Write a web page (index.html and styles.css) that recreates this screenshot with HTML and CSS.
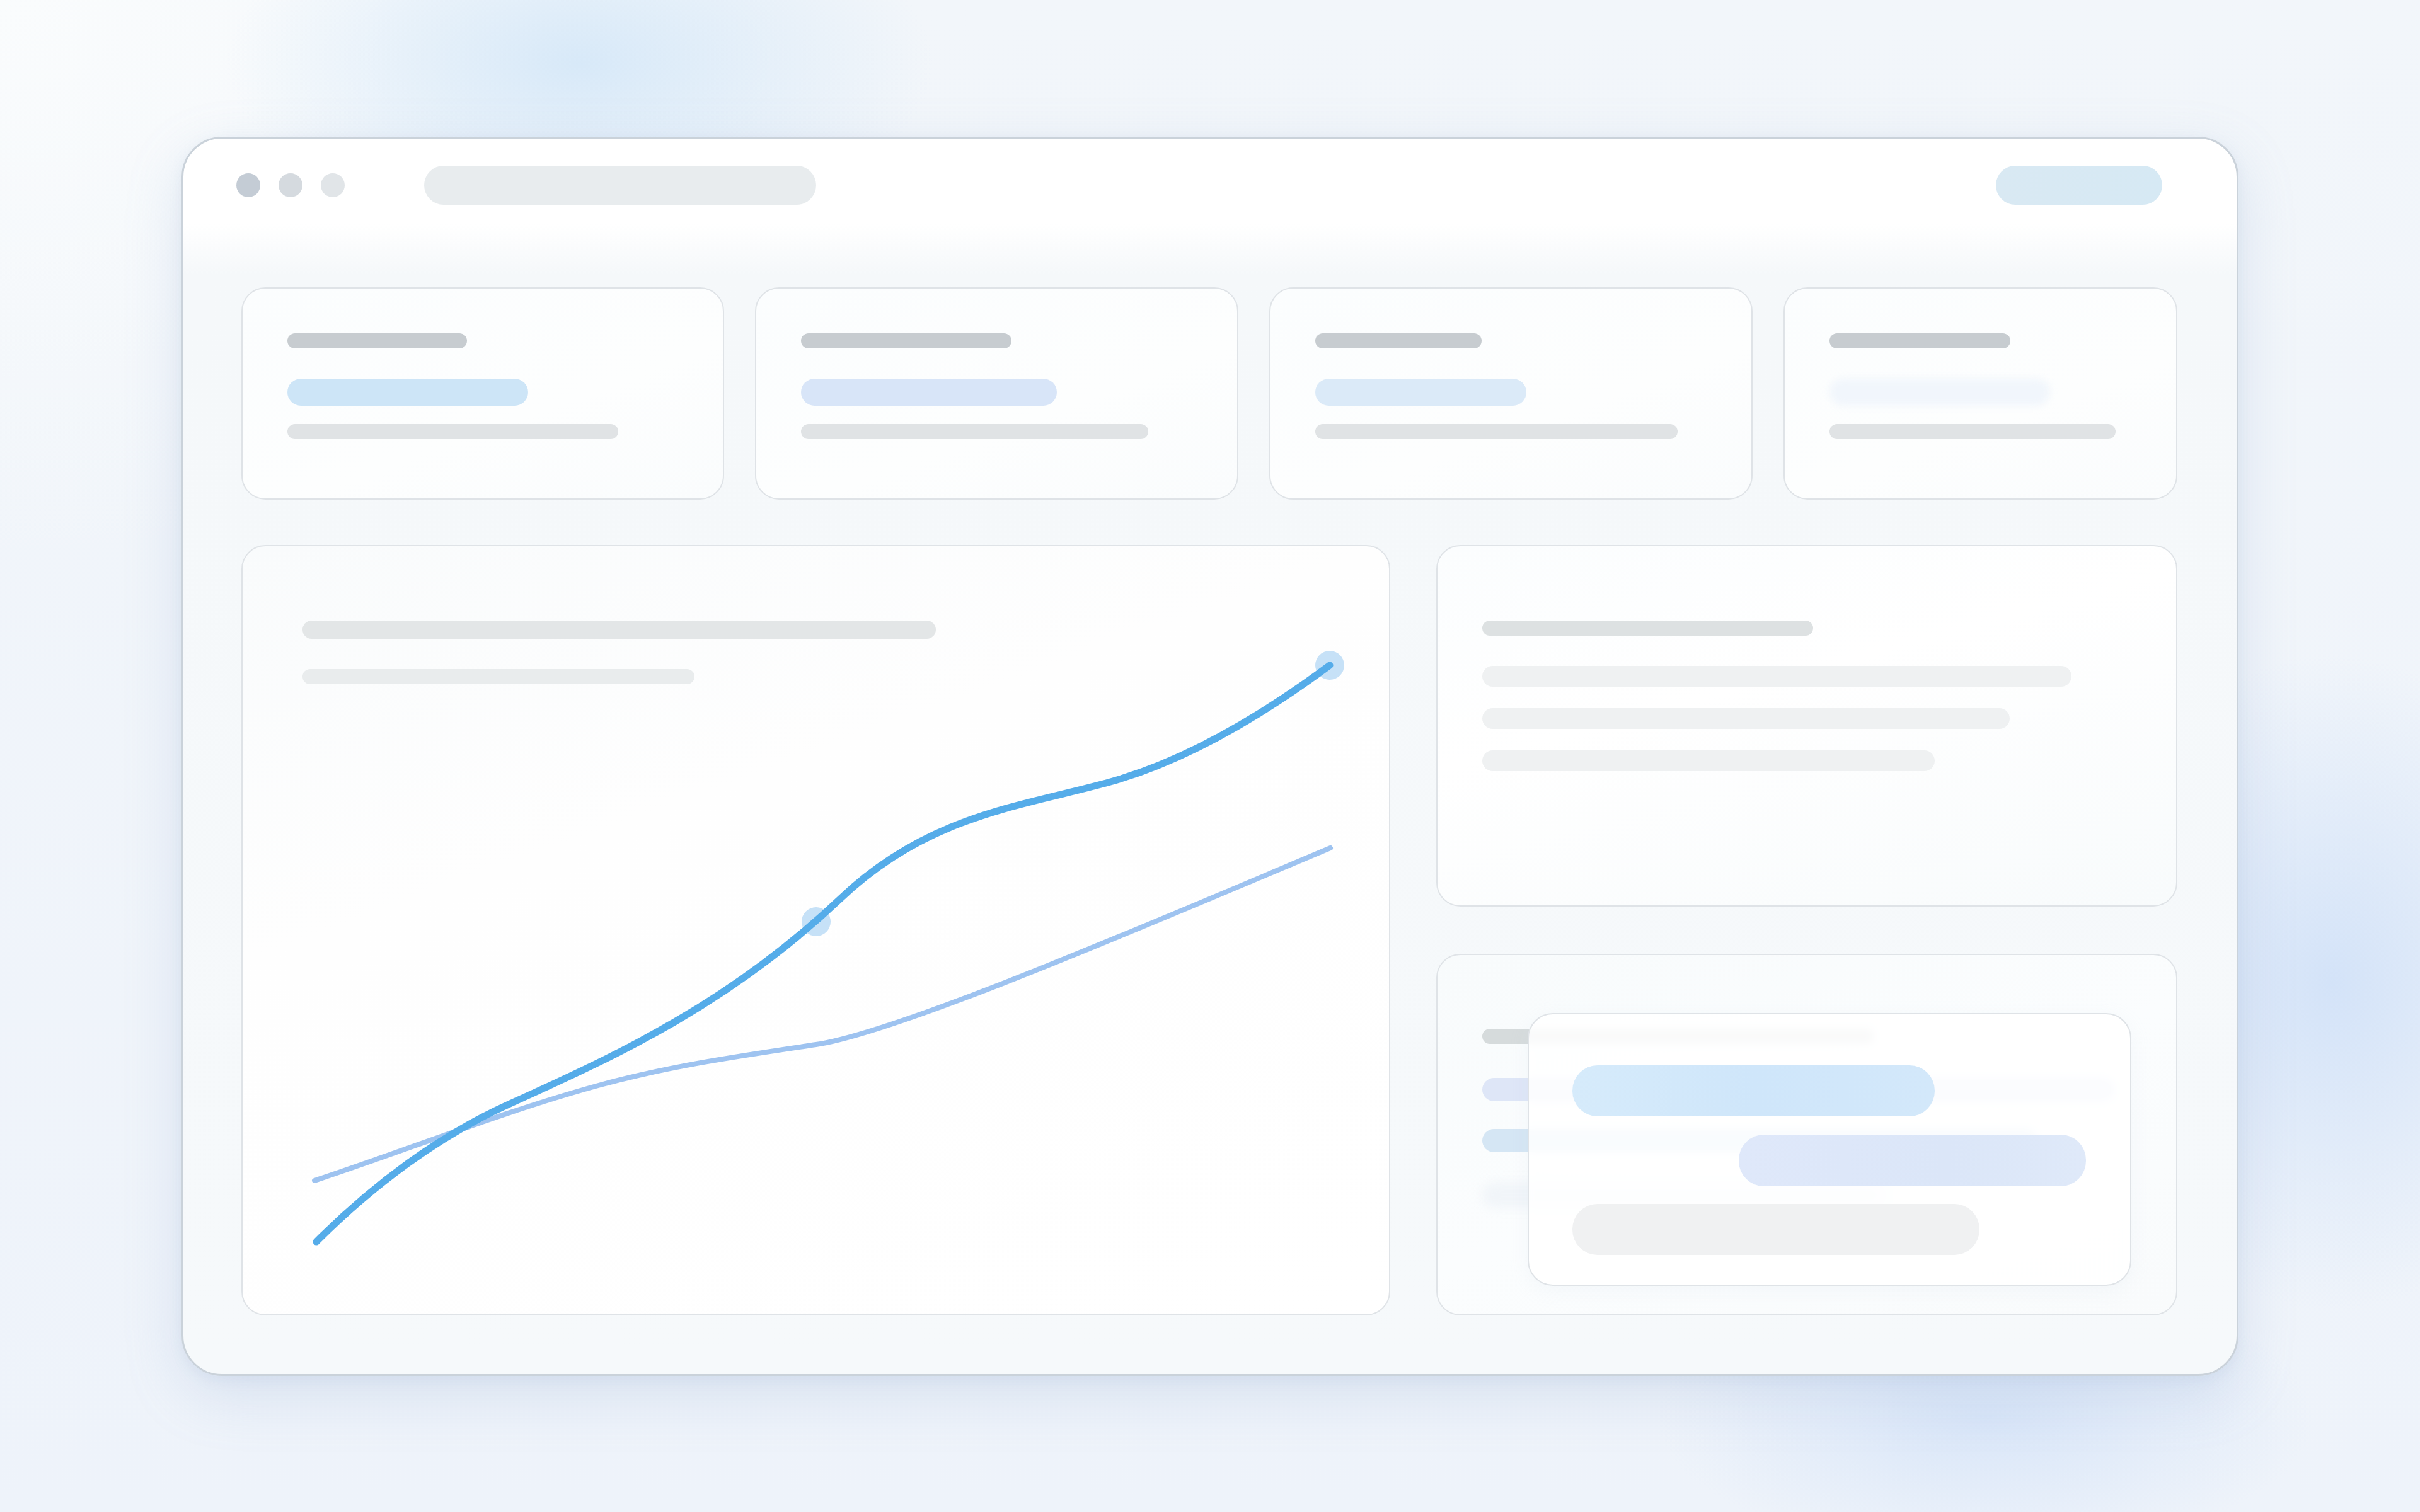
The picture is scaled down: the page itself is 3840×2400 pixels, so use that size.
FILE: index.html
```html
<!DOCTYPE html>
<html lang="en">
<head>
<meta charset="utf-8">
<title>Dashboard skeleton</title>
<link rel="stylesheet" href="styles.css">
</head>
<body>
<div class="window">
  <header class="titlebar">
    <div class="dots">
      <span class="dot dot-1"></span>
      <span class="dot dot-2"></span>
      <span class="dot dot-3"></span>
    </div>
    <div class="url"></div>
    <div class="action"></div>
  </header>
  <main class="content">
    <section class="stats">
      <div class="card stat">
        <div class="bar label w-285"></div>
        <div class="bar value value-1 w-382"></div>
        <div class="bar meta w-525"></div>
      </div>
      <div class="card stat">
        <div class="bar label w-334"></div>
        <div class="bar value value-2 w-406"></div>
        <div class="bar meta w-551"></div>
      </div>
      <div class="card stat">
        <div class="bar label w-264"></div>
        <div class="bar value value-3 w-335"></div>
        <div class="bar meta w-575"></div>
      </div>
      <div class="card stat">
        <div class="bar label w-287"></div>
        <div class="bar value value-4 w-350"></div>
        <div class="bar meta w-454"></div>
      </div>
    </section>
    <section class="main-row">
      <div class="card chart">
        <div class="chart-head">
          <div class="bar chart-title"></div>
          <div class="bar chart-sub"></div>
        </div>
        <svg class="chart-svg" viewBox="386 1085 1819 1000" preserveAspectRatio="xMinYMin meet">
          <path class="line-2" d="M500,1873 C651,1823 803,1762 954,1721 C1068,1690 1182,1674 1296,1657 C1430,1637 1840,1459 2112,1345"/>
          <circle class="point" cx="1296" cy="1462" r="23"/>
          <circle class="point" cx="2111" cy="1055" r="23"/>
          <path class="line-1" d="M503,1970 C593,1880 698,1801.5 808,1752 C983,1673 1160,1591 1335,1425 C1475,1292 1623,1279 1763,1240 C1879,1207.5 1995,1141 2111,1055"/>
        </svg>
      </div>
      <div class="side">
        <div class="card list">
          <div class="bar list-title"></div>
          <div class="bar row w-935"></div>
          <div class="bar row w-837"></div>
          <div class="bar row w-718"></div>
        </div>
        <div class="card stack">
          <div class="bar s-title"></div>
          <div class="bar s-row s-row-1"></div>
          <div class="bar s-row s-row-2"></div>
          <div class="bar s-row s-row-3"></div>
          <div class="popover">
            <div class="pill pill-1"></div>
            <div class="pill pill-2"></div>
            <div class="pill pill-3"></div>
          </div>
        </div>
      </div>
    </section>
  </main>
</div>
</body>
</html>
```

FILE: styles.css
```css
* { box-sizing: border-box; }

html, body {
  margin: 0;
  padding: 0;
}

body {
  width: 3840px;
  height: 2400px;
  overflow: hidden;
  display: flex;
  align-items: center;
  justify-content: center;
  font-family: "Liberation Sans", Arial, sans-serif;
  background-color: #eef3fa;
  background-image:
    radial-gradient(ellipse 560px 280px at 920px 100px, rgba(214, 232, 248, 0.95), rgba(214, 232, 248, 0) 100%),
    radial-gradient(ellipse 420px 520px at 3700px 1560px, rgba(210, 226, 248, 0.95), rgba(210, 226, 248, 0) 100%),
    radial-gradient(ellipse 520px 220px at 3150px 2250px, rgba(214, 228, 248, 0.9), rgba(214, 228, 248, 0) 100%),
    radial-gradient(ellipse 1300px 900px at 0px 0px, rgba(250, 252, 253, 1), rgba(250, 252, 253, 0) 100%),
    linear-gradient(180deg, #f2f6fa 0%, #eef3fa 100%);
}

.window {
  width: 3264px;
  height: 1967px;
  border: 3px solid #cad2da;
  border-radius: 64px;
  overflow: hidden;
  background: linear-gradient(180deg, #ffffff 0px, #ffffff 135px, #f5f8fa 215px, #f6f9fb 100%);
  box-shadow: 0 30px 90px rgba(130, 160, 205, 0.22), 0 6px 20px rgba(150, 170, 200, 0.12);
  display: flex;
  flex-direction: column;
}

/* title bar */
.titlebar {
  height: 148px;
  flex: 0 0 auto;
  display: flex;
  align-items: center;
  padding: 0 118px 0 84px;
}

.dots {
  display: flex;
  gap: 29px;
}

.dot {
  width: 38px;
  height: 38px;
  border-radius: 50%;
  display: block;
}
.dot-1 { background: #c4ccd5; }
.dot-2 { background: #d5dadf; }
.dot-3 { background: #e1e5e8; }

.url {
  margin-left: 126px;
  width: 622px;
  height: 62px;
  border-radius: 31px;
  background: #e8ecee;
}

.action {
  margin-left: auto;
  width: 264px;
  height: 62px;
  border-radius: 31px;
  background: linear-gradient(90deg, #d9e9f3, #d6e9f4);
}

/* content */
.content {
  flex: 1 1 auto;
  padding: 88px 94px 0 92px;
  display: flex;
  flex-direction: column;
  gap: 72px;
}

.card {
  border: 2px solid #dfe3e7;
  border-radius: 38px;
  background: linear-gradient(160deg, #fbfdfe 0%, #fdfefe 60%, #fafcfd 100%);
}

.bar {
  border-radius: 999px;
}

.stats {
  display: grid;
  grid-template-columns: 766px 767px 767px 1fr;
  gap: 49px;
  height: 337px;
}

.stat {
  padding: 71px 0 0 71px;
}

.stat .label {
  height: 24px;
  background: #c7ccd0;
}
.stat .value {
  margin-top: 48px;
  height: 43px;
}
.stat .meta {
  margin-top: 29px;
  height: 24px;
  background: #e0e3e5;
}

.value-1 { background: #cde5f7; }
.value-2 { background: #d8e5f8; }
.value-3 { background: #dbeaf8; }
.value-4 { background: #f1f6fc; filter: blur(6px); }

.w-264 { width: 264px; }
.w-285 { width: 285px; }
.w-287 { width: 287px; }
.w-334 { width: 334px; }
.w-335 { width: 335px; }
.w-350 { width: 350px; }
.w-382 { width: 382px; }
.w-406 { width: 406px; }
.w-454 { width: 454px; }
.w-525 { width: 525px; }
.w-551 { width: 551px; }
.w-575 { width: 575px; }
.w-718 { width: 718px; }
.w-837 { width: 837px; }
.w-935 { width: 935px; }

.main-row {
  display: grid;
  grid-template-columns: 1823px 1fr;
  gap: 73px;
  height: 1223px;
}

/* chart */
.chart {
  display: flex;
  flex-direction: column;
  background: linear-gradient(160deg, #f9fbfc 0%, #fefefe 35%, #ffffff 100%);
}

.chart-head {
  padding: 118px 0 0 95px;
  flex: 0 0 auto;
}

.chart-title {
  width: 1005px;
  height: 29px;
  background: #e3e6e7;
}

.chart-sub {
  margin-top: 48px;
  width: 622px;
  height: 24px;
  background: #e9eced;
}

.chart-svg {
  display: block;
  flex: 1 1 auto;
  width: 100%;
  min-height: 0;
  overflow: visible;
}

.line-1 {
  fill: none;
  stroke: #55ace9;
  stroke-width: 11;
  stroke-linecap: round;
}

.line-2 {
  fill: none;
  stroke: #9ec3f0;
  stroke-width: 8;
  stroke-linecap: round;
}

.point {
  fill: #c6e1f7;
}

/* side column */
.side {
  display: grid;
  grid-template-rows: 1fr 1fr;
  gap: 75px;
}

.list {
  padding: 118px 0 0 71px;
  background: linear-gradient(165deg, #fbfdfe 0%, #ffffff 40%, #f8fbfc 100%);
}

.list-title {
  width: 525px;
  height: 24px;
  background: #dde1e2;
}

.list .row {
  margin-top: 34px;
  height: 33px;
  background: #eff1f2;
}
.list .list-title + .row { margin-top: 48px; }

.stack {
  position: relative;
  padding: 117px 0 0 71px;
  background: linear-gradient(160deg, #f8fbfc 0%, #fbfdfe 50%, #f9fbfc 100%);
}

.s-title {
  width: 621px;
  height: 24px;
  background: #d6dbdc;
}

.s-row { height: 37px; }
.s-row-1 { margin-top: 54px; width: 1003px; background: #dee6f7; }
.s-row-2 { margin-top: 44px; width: 880px; background: #d5e6f4; }
.s-row-3 { margin-top: 48px; width: 640px; height: 40px; background: #f1f5f9; filter: blur(8px); }

.popover {
  position: absolute;
  left: 143px;
  top: 92px;
  width: 958px;
  height: 433px;
  padding: 81px 0 0 69px;
  border: 2px solid #dfe3e7;
  border-radius: 40px;
  background: rgba(255, 255, 255, 0.86);
  backdrop-filter: blur(6px);
  box-shadow: 0 8px 30px rgba(200, 215, 230, 0.14);
}

.pill {
  height: 81px;
  border-radius: 40px;
}

.pill-1 {
  width: 575px;
  background: linear-gradient(90deg, #d6ebfb 0%, #cfe6fa 50%, #d3e8fa 100%);
}

.pill-2 {
  margin-top: 29px;
  margin-left: 264px;
  width: 551px;
  height: 82px;
  background: linear-gradient(90deg, #dfe8fa 0%, #dbe6f8 60%, #dfe9f9 100%);
}

.pill-3 {
  margin-top: 28px;
  width: 646px;
  background: #f0f1f2;
}
```
